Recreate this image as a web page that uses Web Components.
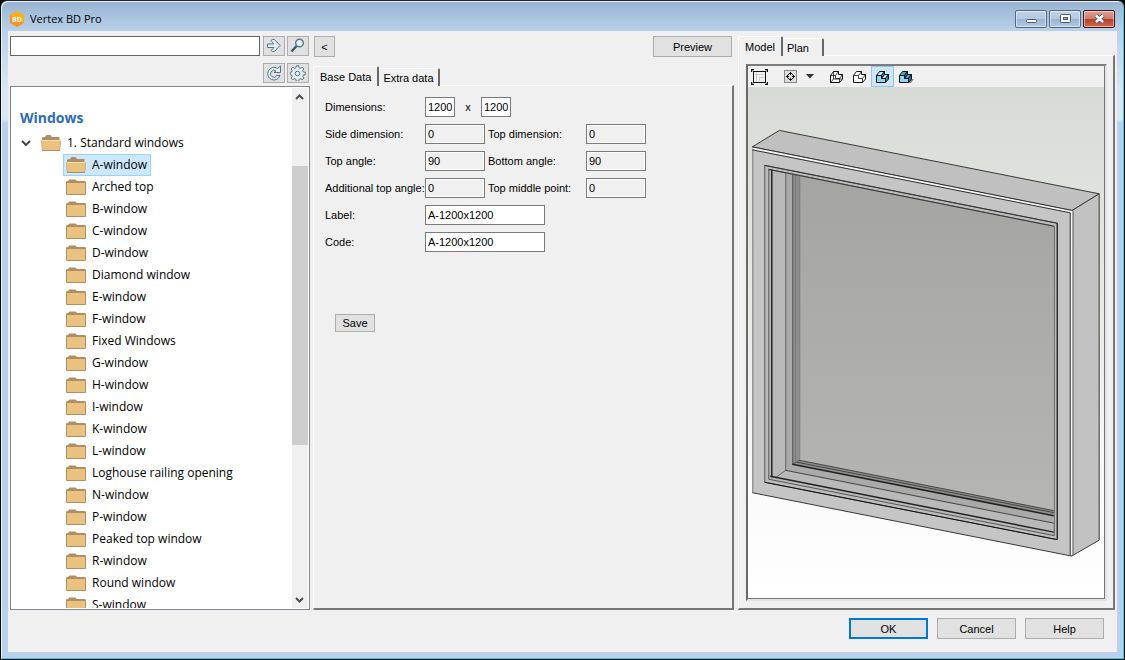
<!DOCTYPE html>
<html lang="en">
<head>
<meta charset="utf-8">
<title>Vertex BD Pro</title>
<style>
html,body{margin:0;height:100%;background:#000;}
body{font:11px/14px "Liberation Sans",Arial,sans-serif;color:#000;}
</style>
</head>
<body>
<app-window heading="Vertex BD Pro">
  <library-pane slot="left"></library-pane>
  <base-data-pane slot="center"></base-data-pane>
  <model-pane slot="right"></model-pane>
  <push-button slot="actions" primary>OK</push-button>
  <push-button slot="actions">Cancel</push-button>
  <push-button slot="actions">Help</push-button>
</app-window>
<script>
class BaseElement extends HTMLElement {
  constructor(){
    super();
    this.attachShadow({mode:'open'});
  }
  connectedCallback(){
    this.shadowRoot.innerHTML='<style>*{box-sizing:border-box}button,input{font:inherit;color:inherit;margin:0;border-radius:0}'+this.css()+'</style>'+this.html();
  }
}

customElements.define('push-button',class extends BaseElement{
  css(){return `
:host{display:block;width:79px;height:21px}
button{width:100%;height:100%;padding:0;background:#e1e1e1;border:1px solid #adadad;display:block}
:host([primary]) button{border:2px solid #0078d7}
:host([small]){width:40px;height:18px}
:host([mini]){width:21px}`}
  html(){return `<button type="button"><slot></slot></button>`}
});

customElements.define('icon-button',class extends BaseElement{
  css(){return `
:host{display:block;width:22px;height:20px}
button{width:100%;height:100%;padding:0;background:#e1e1e1;border:1px solid #adadad;display:grid;place-items:center}
svg{display:block}`}
  html(){
    const art={
      go:'<path d="M1.500 6h6.500l-3-3.500 1.500-1h2l5.500 6-5.500 6h-2L5 12.500 8 9.500H1.500z" fill="#e4f0f8" stroke="#557488"/>',
      find:'<path d="M1.500 13.500l5-5.500" stroke="#3e5a68" stroke-width="2.500"/><circle cx="9.500" cy="5" r="3.800" fill="#e4f0f8" stroke="#557488" stroke-width="1.400"/>',
      refresh:'<path d="M11.500 3.500A6.300 6.300 0 1 0 14 10.500h-3a3.500 3.500 0 1 1-1-4.500L8 7.500h6.500V1z" fill="#e4f0f8" stroke="#557488"/>',
      settings:'<path d="M6.300.8h2.400l.4 2 1.400.6 1.700-1.200 1.700 1.700-1.200 1.700.6 1.400 2 .4v2.200l-2 .4-.6 1.400 1.200 1.700-1.700 1.700-1.700-1.200-1.400.6-.4 2H6.300l-.4-2-1.400-.6-1.700 1.200-1.700-1.700 1.200-1.700L1.700 10l-1.500-.4V7.400l1.500-.4.600-1.400-1.200-1.700 1.700-1.700 1.700 1.200 1.400-.6z" fill="#e4f0f8" stroke="#557488"/><circle cx="7.500" cy="8.500" r="2.300" fill="#eee" stroke="#557488"/>'};
    return `<button type="button" aria-label="${this.getAttribute('label')}"><svg width="16" height="16" viewBox="0 0 16 16" fill="none">${art[this.getAttribute('icon')]}</svg></button>`}
});

customElements.define('caption-button',class extends BaseElement{
  css(){return `
:host{display:block;width:32px;height:18px}
button{width:100%;height:100%;padding:0;border:1px solid #53687f;border-radius:2px;display:grid;place-items:center;
 box-shadow:inset 0 0 0 1px #ffffff80;background:linear-gradient(#c0d3e8,#b2c8e0 48%,#98b4d2 50%,#b2cbe5)}
:host([kind=close]) button{border-color:#43141a;background:linear-gradient(#e0a093,#d07b6c 48%,#b83c28 50%,#cb6a50)}
svg{display:block}`}
  html(){
    const art={
      minimize:'<rect x="2.500" y="6.500" width="10" height="3" rx="1" fill="#fff" stroke="#535666"/>',
      maximize:'<rect x="2.500" y="1.500" width="10" height="8" rx="1" fill="#fff" stroke="#535666"/><rect x="5.500" y="4.500" width="4" height="2" fill="#9db8d5" stroke="#535666"/>',
      close:'<path d="M4 2.500l7 6.500M11 2.500L4 9" stroke="#535666" stroke-width="4.400"/><path d="M4 2.500l7 6.500M11 2.500L4 9" stroke="#fff" stroke-width="2.400"/>'};
    const k=this.getAttribute('kind');
    return `<button type="button" aria-label="${k}"><svg width="15" height="12" viewBox="0 0 15 12" fill="none">${art[k]}</svg></button>`}
});

customElements.define('app-window',class extends BaseElement{
  css(){return `
:host{display:flex;flex-direction:column;height:100vh;min-height:400px;padding:0 7px 7px;border:1px solid #0a0a0a;border-top-color:#222;border-radius:7px 7px 0 0;overflow:hidden;box-sizing:border-box;
 background:linear-gradient(#98b3d2,#b9d1ea 30px,#dbe6f3 90px,#dbe6f3 118px,#b9d1ea 122px);
 box-shadow:inset 1px 1px 0 #e8f4fc,inset -1px -1px 0 #2fd0ee}
header{display:flex;align-items:center;height:30px;flex:none;gap:5px;padding:6px 1px 0 1px;font:11px/16px "Open Sans","Noto Sans",sans-serif}
h1{font:inherit;margin:0;flex:1}
header svg{display:block}
.caps{display:flex;gap:2px;padding-right:1px}
main{flex:1;min-height:0;background:#f0f0f0;display:flex;flex-direction:column;padding:5px 2px 13px}
.panes{flex:1;min-height:0;display:grid;grid-template-columns:300px minmax(0,1fr) 377px;column-gap:4px;grid-template-rows:minmax(0,1fr)}
footer{display:flex;justify-content:flex-end;gap:9px;padding:8px 11px 0 0}`}
  html(){return `
<header>
 <svg width="16" height="16" viewBox="0 0 16 16"><path d="M8 0l7 4v8l-7 4-7-4V4z" fill="#f7941e"/><path d="M8 0l7 4v8L8 8 1 4z" fill="#fbb117"/><text x="8" y="11" text-anchor="middle" font-family="Open Sans,sans-serif" font-size="7" font-weight="700" fill="#fff">BD</text></svg>
 <h1>${this.getAttribute('heading')}</h1>
 <div class="caps"><caption-button kind="minimize"></caption-button><caption-button kind="maximize"></caption-button><caption-button kind="close"></caption-button></div>
</header>
<main><div class="panes"><slot name="left"></slot><slot name="center"></slot><slot name="right"></slot></div>
<footer><slot name="actions"></slot></footer></main>`}
});

customElements.define('folder-item',class extends BaseElement{
  css(){return `
:host{display:flex;font:12px/20px "Open Sans","Noto Sans",sans-serif}
a{display:flex;gap:6px;align-items:center;height:22px;padding:0 3px 0 2px;border:1px solid transparent;color:#000;text-decoration:none;white-space:nowrap}
:host([selected]) a{background:#cce8ff;border-color:#99d1ff}
svg{display:block;flex:none}`}
  html(){
    const open=this.hasAttribute('open');
    return `<a href="#"><svg width="20" height="16" viewBox="0 0 20 16">${open
      ?'<path d="M1 9V2.500L4 2 5.500 0h4L11 2H18.500v7z" fill="#b08d62"/><path d="M0 5h20l-1 11H1z" fill="#b08d62"/><path d="M0 5h20l-1.500 10h-17z" fill="#e8c27e"/><path d="M1 5.500h18" stroke="#f6e2b4"/>'
      :'<path d="M0 5V2.500L2 2 3.500 0.500H9.500L11 2H19.500L20 5z" fill="#b08d62"/><rect y="3" width="20" height="13" rx="1" fill="#b08d62"/><rect x="1" y="4" width="18" height="11" fill="#e8c27e"/>'}</svg><span><slot></slot></span></a>`}
});

customElements.define('library-pane',class extends BaseElement{
  css(){return `
:host{display:flex;flex-direction:column;min-height:0}
.bar{display:flex;justify-content:flex-end;gap:2px;height:20px;margin-bottom:7px;padding-right:1px}
input{flex:1;min-width:0;margin-right:1px;border:1px solid #646464;background:#fff;padding:0 3px}
.bar+.bar{margin-bottom:3px}
.tree{flex:1;min-height:0;display:flex;border:1px solid #828790;background:#fff;padding:1px}
.list{flex:1;min-width:0;overflow:hidden;padding:19px 0 0 8px}
h2{font:700 14px/22px "Open Sans","Noto Sans",sans-serif;color:#2b6cb8;margin:0;height:25px}
.root{display:flex;align-items:center;gap:5px}
ul{list-style:none;margin:0;padding:0 0 0 43px}
.scroll{width:16px;background:#f0f0f0;display:flex;flex-direction:column;align-items:center;flex:none}
.scroll svg{flex:none;display:block}
.track{flex:1;width:100%;display:grid;grid-template-rows:61fr 279fr 146fr}
.track i{grid-row:2;background:#cdcdcd}`}
  html(){
    const names=['A-window','Arched top','B-window','C-window','D-window','Diamond window','E-window','F-window','Fixed Windows','G-window','H-window','I-window','K-window','L-window','Loghouse railing opening','N-window','P-window','Peaked top window','R-window','Round window','S-window'];
    return `
<div class="bar"><input type="text" aria-label="Search"><icon-button icon="go" label="Go"></icon-button><icon-button icon="find" label="Find"></icon-button></div>
<div class="bar"><icon-button icon="refresh" label="Refresh"></icon-button><icon-button icon="settings" label="Settings"></icon-button></div>
<div class="tree"><div class="list"><h2>Windows</h2>
<div class="root"><svg width="13" height="12" viewBox="0 0 13 12"><path d="M2 4l4 4 4-4" fill="none" stroke="#404040" stroke-width="1.800"/></svg><folder-item open>1. Standard windows</folder-item></div>
<ul>${names.map((n,i)=>`<li><folder-item ${i?'':'selected open'}>${n}</folder-item></li>`).join('')}</ul></div>
<div class="scroll"><svg width="16" height="17" viewBox="0 0 16 17"><path d="M4 11l3.500-3.500L11 11" fill="none" stroke="#505050" stroke-width="2"/></svg><div class="track"><i></i></div><svg width="16" height="17" viewBox="0 0 16 17"><path d="M4 7l3.500 3.500L11 7" fill="none" stroke="#505050" stroke-width="2"/></svg></div></div>`}
});

customElements.define('tab-box',class extends BaseElement{
  css(){return `
:host{display:flex;flex-direction:column;min-height:0;flex:1}
nav{display:flex;align-items:flex-end;height:20px;position:relative;margin-bottom:-1px;flex:none}
button{height:18px;padding:0 4px;background:#f0f0f0;border:solid;border-width:1px 2px 0 0;border-color:#fff #696969 #fff #fff;line-height:16px;border-radius:2px 2px 0 0;text-align:left;white-space:nowrap}
button:first-child{height:20px;padding:0 6px;border-width:1px 2px 0 1px;line-height:18px}
:host([wide]) button:last-child{width:41px}
section{flex:1;min-height:0;display:flex;flex-direction:column;border:solid;border-width:1px 2px 2px 1px;border-color:#fff #777 #777 #fff}`}
  html(){return `<nav role="tablist">${this.getAttribute('tabs').split('|').map(t=>`<button type="button" role="tab">${t}</button>`).join('')}</nav><section><slot></slot></section>`}
});

customElements.define('base-data-pane',class extends BaseElement{
  css(){return `
:host{display:flex;flex-direction:column;min-height:0;margin-left:-1px}
.bar{display:flex;justify-content:space-between;padding:0 2px 0 1px;margin-bottom:9px}
form{display:grid;grid-template-columns:100px 60px 101px 60px;grid-auto-rows:20px;row-gap:7px;align-items:center;padding:11px 0 0 11px}
label{white-space:nowrap}
.second{padding-left:3px}
input{width:100%;height:20px;border:1px solid #7a7a7a;padding:0 2px;background:#fff;display:block;min-width:0}
input[readonly]{background:#f0f0f0;box-shadow:inset 0 0 0 1px #fff}
.size{grid-column:2/-1;display:flex;align-items:center}
.size input{width:30px}
.size label{width:26px;text-align:center}
.long{grid-column:2/4;width:120px}
.row{grid-column:1}
.save{margin:62px 0 0 21px}`}
  html(){
    const ro=(id,l,v,c='')=>`<label class="${c}" for="${id}">${l}</label><input id="${id}" value="${v}" readonly>`;
    return `
<div class="bar"><push-button mini>&lt;</push-button><push-button>Preview</push-button></div>
<tab-box tabs="Base Data|Extra data"><form>
<label class="row" for="w">Dimensions:</label><div class="size"><input id="w" value="1200"><label for="h">x</label><input id="h" value="1200"></div>
${ro('sd','Side dimension:','0','row')}${ro('td','Top dimension:','0','second')}
${ro('ta','Top angle:','90','row')}${ro('ba','Bottom angle:','90','second')}
${ro('aa','Additional top angle:','0','row')}${ro('mp','Top middle point:','0','second')}
<label class="row" for="lb">Label:</label><input class="long" id="lb" value="A-1200x1200">
<label class="row" for="cd">Code:</label><input class="long" id="cd" value="A-1200x1200">
</form><push-button class="save" small>Save</push-button></tab-box>`}
});

customElements.define('model-view',class extends BaseElement{
  css(){return `
:host{display:block;flex:1;min-height:0;background:linear-gradient(#d8dad5,#e6e8e3 38%,#fafafa 78%,#fff)}
svg{display:block;width:100%;height:100%}`}
  html(){return `<svg viewBox="748 87 356 512" role="img" aria-label="Window model">
<defs>
<linearGradient id="glass" x1="0" y1="0" x2="0" y2="1"><stop offset="0" stop-color="#a4a4a2"/><stop offset="1" stop-color="#b5b5b4"/></linearGradient></defs>
<g stroke="#383838" stroke-width="1" stroke-linejoin="round">
<path d="M752 147L779 130.500 1099.500 194 1072 211z" fill="#c0c0c0"/>
<path d="M1072 211L1099.500 194V541L1072 557z" fill="#c2c2c2"/>
<path d="M752 147L1072 211V557L752 493.500z" fill="#c5c5c5" stroke="none"/>
<path d="M752.500 147.500V493.500" stroke="#777"/>
<path d="M752 493.500L1072 557" fill="none"/></g>
<path d="M752 148.500L1071.500 212V556" fill="none" stroke="#f6f6f6" stroke-width="2"/>
<path d="M752 147L1072 210.500M752 150L1070.500 213V556.500" fill="none" stroke="#303030"/>
<path d="M1073.500 211V556" stroke="#777"/>
<path d="M764.500 165.500L1057.500 223.500V540.500L764.500 483z" fill="#bdbdbd" stroke="#555"/>
<path d="M768.500 169.500L1054.500 226.500V536.500L768.500 480z" fill="#b9b9b9" stroke="#555"/>
<path d="M785 173V471L1054 524V226z" fill="#aaaaa9"/>
<path d="M792 174V465L1054 516V226z" fill="#8f8f8f"/>
<path d="M799 176V461L1054 511.500V227z" fill="url(#glass)"/>
<g fill="none" stroke="#444">
<path d="M771.500 170V478" stroke="#222" stroke-width="1.500"/>
<path d="M785.500 173V471L775 478.500" stroke="#666"/>
<path d="M785 471L1054 524"/>
<path d="M792.500 174V465L799.500 461" stroke="#555"/>
<path d="M795.500 175V463M799.500 176V461" stroke="#777"/>
<path d="M799 461L1054 511.500M797 463L1054 513.500"/>
<path d="M792 465L1054 516.500" stroke="#222" stroke-width="1.500"/>
<path d="M770 477L1054 533" stroke="#222" stroke-width="1.500"/>
</g>
<path d="M764 165.500L1057.500 223.500M768 169.500L1054 226.500" fill="none" stroke="#333"/>
<path d="M1057.500 223.500V540.500L764 483" fill="none" stroke="#111"/>
</svg>`}
});

customElements.define('model-pane',class extends BaseElement{
  css(){return `
:host{display:flex;flex-direction:column;min-height:0}
.view{flex:1;min-height:0;margin:8px 6px 7px 7px;display:flex;flex-direction:column;border:2px solid;border-color:#7c7c7c #e3e3e3 #e3e3e3 #696969}
.inner{flex:1;min-height:0;display:flex;flex-direction:column;border:solid #777;border-width:0 1px 1px 0}
.tools{height:21px;display:flex;align-items:center;flex:none}
.tools button{width:23px;height:21px;padding:0;border:1px solid transparent;background:none;display:grid;place-items:center;flex:none}
.tools .fit{margin-right:8px}
.tools .drop{width:15px;margin-right:8px}
.tools .on{border-color:#8ac6f0;background:#cfe6f8}
svg{display:block}`}
  html(){
    const cube=(front,side,dark,extra='')=>`<svg width="17" height="14" viewBox="0 0 17 14" stroke="#111" stroke-width="1" stroke-linejoin="round">${extra}<path d="M2.500 5.500L5.500 1.500h5L7.500 5.500z" fill="${side}"/><path d="M7.500 5.500l3-4V4.500l-3 4z" fill="${dark}"/><path d="M7.500 8.500l3-4H14.500l-3 4z" fill="${side}"/><path d="M11.500 8.500l3-4V9l-3 3.500z" fill="${dark}"/><path d="M2.500 5.500h5v3h4v4h-9z" fill="${front}"/></svg>`;
    const line=(inner)=>`<svg width="17" height="14" viewBox="0 0 17 14" stroke="#111" stroke-linejoin="round"><path d="M2.500 5.500L5.500 1.500h5V4.500H14.500V9l-3 3.500h-9z" fill="#fff"/><path d="M2.500 5.500h5v3h4v4M7.500 5.500l3-4M11.500 8.500l3-4${inner}" fill="none" stroke-width=".8"/></svg>`;
    return `
<tab-box tabs="Model|Plan" wide><div class="view"><div class="inner"><div class="tools">
<button type="button" class="fit" aria-label="Zoom to fit"><svg width="17" height="16" viewBox="0 0 17 16" fill="none" stroke="#111"><path d="M4 5.500h9M5.500 3v10M8.500 11.500v-3h5" stroke="#ccc"/><rect x="2.500" y="2.500" width="12" height="11"/><path d="M.500 3V.500H3M14 .500h2.500V3M16.500 13v2.500H14M3 15.500H.500V13" stroke-width="1.500"/></svg></button>
<button type="button" aria-label="Center"><svg width="13" height="13" viewBox="0 0 13 13"><rect x=".5" y=".5" width="12" height="12" fill="#ddd" stroke="#888"/><path d="M6.500 2.500L10.500 6.500 6.500 10.500 2.500 6.500zM6.500 2v3M6.500 8v3M2 6.500h3M8 6.500h3" fill="none" stroke="#111"/></svg></button>
<button type="button" class="drop" aria-label="Center options"><svg width="8" height="5" viewBox="0 0 8 5"><path d="M0 0h8L4 4.500z" fill="#333"/></svg></button>
<button type="button" aria-label="Wireframe">${line('M5.500 1.500v7.500h8.500M5.500 9l-3 3.500')}</button>
<button type="button" aria-label="Hidden line">${line('')}</button>
<button type="button" class="on" aria-label="Shaded">${cube('#8fd3f5','#c4e8fa','#2b8fc0')}</button>
<button type="button" aria-label="Shaded with shadow">${cube('#8fd3f5','#4ba9d4','#2b7fa8','<path d="M9 13l5-4h3l-3 4z" fill="#888" stroke="none"/>')}</button>
</div><model-view></model-view></div></div></tab-box>`}
});
</script>
</body>
</html>
